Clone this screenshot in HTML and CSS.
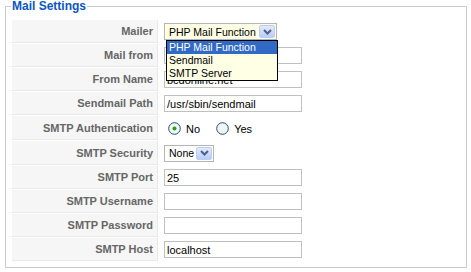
FILE: index.html
```html
<!DOCTYPE html>
<html lang="en">
  <head>
    <meta charset="UTF-8" />
    <title>Mail Settings</title>
    <link rel="stylesheet" href="styles.css">
  </head>
  <body>
    <fieldset class="adminform">
      <legend>Mail Settings</legend>
      <table class="admintable">
        <tr>
          <td class="key">Mailer</td>
          <td class="val">
            <div class="select-wrap">
              <div class="select select-focus select-mailer">
                <span class="select-text">PHP Mail Function</span>
                <span class="select-btn">
                  <svg width="9" height="6" viewBox="0 0 9 6"><path d="M1 1 L4.5 4.5 L8 1" fill="none" stroke="#4d6185" stroke-width="2"/></svg>
                </span>
              </div>
              <ul class="select-list">
                <li class="active">PHP Mail Function</li>
                <li>Sendmail</li>
                <li>SMTP Server</li>
              </ul>
            </div>
          </td>
        </tr>
        <tr>
          <td class="key">Mail from</td>
          <td class="val"><input class="text_area" type="text" value=""></td>
        </tr>
        <tr>
          <td class="key">From Name</td>
          <td class="val"><input class="text_area" type="text" value="bcdonline.net"></td>
        </tr>
        <tr>
          <td class="key">Sendmail Path</td>
          <td class="val"><input class="text_area" type="text" value="/usr/sbin/sendmail"></td>
        </tr>
        <tr class="tall">
          <td class="key">SMTP Authentication</td>
          <td class="val">
            <span class="radio">
              <svg width="13" height="13" viewBox="0 0 13 13"><circle cx="6.5" cy="6.5" r="5.8" fill="#f4f4f0" stroke="#1c5180" stroke-width="1"/><circle cx="6.5" cy="6.5" r="2" fill="#22a022"/></svg>
              No
            </span>
            <span class="radio">
              <svg width="13" height="13" viewBox="0 0 13 13"><circle cx="6.5" cy="6.5" r="5.8" fill="#f4f4f0" stroke="#1c5180" stroke-width="1"/></svg>
              Yes
            </span>
          </td>
        </tr>
        <tr class="tall">
          <td class="key">SMTP Security</td>
          <td class="val">
            <div class="select select-none">
              <span class="select-text">None</span>
              <span class="select-btn">
                <svg width="9" height="6" viewBox="0 0 9 6"><path d="M1 1 L4.5 4.5 L8 1" fill="none" stroke="#4d6185" stroke-width="2"/></svg>
              </span>
            </div>
          </td>
        </tr>
        <tr>
          <td class="key">SMTP Port</td>
          <td class="val"><input class="text_area" type="text" value="25"></td>
        </tr>
        <tr>
          <td class="key">SMTP Username</td>
          <td class="val"><input class="text_area" type="text" value=""></td>
        </tr>
        <tr>
          <td class="key">SMTP Password</td>
          <td class="val"><input class="text_area" type="password" value=""></td>
        </tr>
        <tr>
          <td class="key">SMTP Host</td>
          <td class="val"><input class="text_area" type="text" value="localhost"></td>
        </tr>
      </table>
    </fieldset>
  </body>
</html>
```

FILE: styles.css
```css
body {
  margin: 0;
  background-color: #fff;
  font-family: "Liberation Sans", Arial, sans-serif;
  font-size: 11px;
  color: #333;
}

.adminform {
  margin: 0 4px 0 5px;
  padding: 0 5px 5px 5px;
  border: 1px solid #ccc;
  min-width: 0;
}

.adminform legend {
  padding: 0 1px;
  font-size: 12px;
  line-height: 13px;
  font-weight: bold;
  color: #0b55c4;
}

.admintable {
  width: 100%;
  margin-top: 6px;
  border-spacing: 1px;
}

.admintable td {
  padding: 0;
  height: 22px;
  vertical-align: middle;
}

.admintable td.key {
  width: 140px;
  padding: 0 4px 0 1px;
  background-color: #f6f6f6;
  border-bottom: 1px solid #e9e9e9;
  border-right: 1px solid #e9e9e9;
  text-align: right;
  font-weight: bold;
  color: #666;
}

.admintable tr.tall td {
  height: 23px;
}

.admintable td.val {
  padding-left: 5px;
}

.text_area {
  box-sizing: border-box;
  display: block;
  width: 138px;
  height: 17px;
  margin: 0;
  padding: 0 2px;
  border: 1px solid #c0c0c0;
  background-color: #fff;
  font-family: "Liberation Sans", Arial, sans-serif;
  font-size: 11px;
  color: #000;
  outline: none;
}

.select-wrap {
  position: relative;
}

.select {
  box-sizing: border-box;
  display: flex;
  align-items: center;
  height: 17px;
  border: 1px solid #b5b5b5;
  background-color: #fff;
  padding: 1px;
  font-size: 10.5px;
  color: #000;
}

.select-focus {
  background-color: #ffffe6;
}

.select-mailer {
  width: 113px;
}

.select-none {
  width: 50px;
}

.select-text {
  flex: 1;
  padding-left: 3px;
  white-space: nowrap;
}

.select-btn {
  box-sizing: border-box;
  display: flex;
  align-items: center;
  justify-content: center;
  width: 16px;
  height: 13px;
  border: 1px solid #bccdf5;
  border-radius: 2px;
  background: linear-gradient(#e3ebfd, #b9cdf7);
}

.select-list {
  position: absolute;
  top: 17px;
  left: 2px;
  box-sizing: border-box;
  width: 112px;
  margin: 0;
  padding: 0;
  list-style: none;
  border: 1px solid #000;
  background-color: #ffffe6;
  font-size: 10.5px;
  color: #000;
  z-index: 10;
}

.select-list li {
  height: 13px;
  line-height: 13px;
  padding-left: 2px;
  white-space: nowrap;
}

.select-list li.active {
  background-color: #316ac5;
  color: #fff;
}

.radio {
  display: inline-flex;
  align-items: center;
  gap: 5px;
  margin-left: 4px;
  margin-right: 9px;
  margin-top: 3px;
  font-size: 11px;
  color: #000;
}

.radio svg {
  display: block;
}
```
